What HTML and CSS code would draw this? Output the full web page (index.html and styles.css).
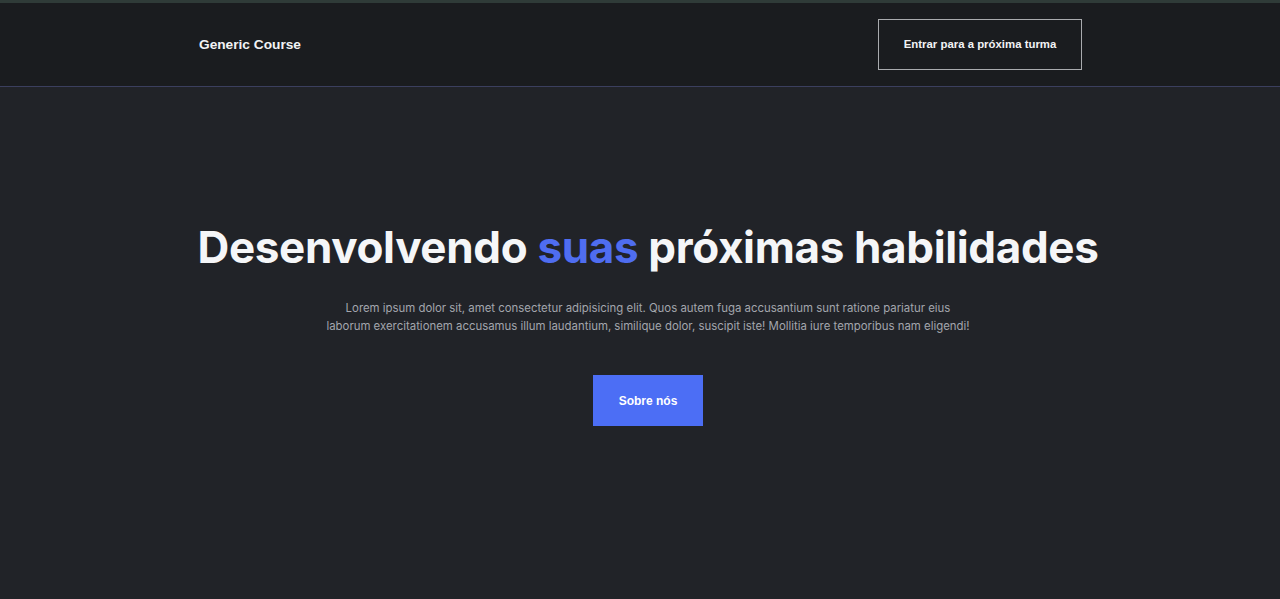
FILE: index.html
```html
<!DOCTYPE html>
<html lang="pt-BR">
<head>
<meta charset="utf-8">
<title>Generic Course</title>
<link rel="stylesheet" href="styles.css">
</head>
<body>
<header class="topbar">
  <div class="container topbar-inner">
    <span class="brand">Generic Course</span>
    <button class="btn-outline">Entrar para a próxima turma</button>
  </div>
</header>
<main class="hero">
  <h1 class="hero-title">Desenvolvendo <span class="accent">suas</span> próximas habilidades</h1>
  <p class="hero-text">Lorem ipsum dolor sit, amet consectetur adipisicing elit. Quos autem fuga accusantium sunt ratione pariatur eius laborum exercitationem accusamus illum laudantium, similique dolor, suscipit iste! Mollitia iure temporibus nam eligendi!</p>
  <button class="btn-primary">Sobre nós</button>
</main>
</body>
</html>
```
FILE: styles.css
```css
* { box-sizing: border-box; }
html, body { margin: 0; padding: 0; }
body {
  background: #212328;
  color: #f5f6f8;
  font-family: "Inter", "Liberation Sans", sans-serif;
  min-height: 599px;
}
.topbar {
  background: #1a1c1f;
  border-top: 3px solid #2f3b38;
  border-bottom: 1px solid #3b3f5e;
  height: 87px;
}
.container {
  width: 884px;
  margin: 0 auto;
  padding-left: 1px;
}
.topbar-inner {
  height: 83px;
  display: flex;
  align-items: center;
  justify-content: space-between;
}
.brand {
  font-family: "Liberation Sans", Arial, sans-serif;
  font-weight: 700;
  font-size: 13.7px;
  color: #f2f3f5;
}
.btn-outline {
  width: 204px;
  height: 51px;
  background: transparent;
  border: 1px solid #a9abae;
  color: #f2f3f5;
  font-family: "Liberation Sans", Arial, sans-serif;
  font-weight: 700;
  font-size: 11.4px;
  padding: 0;
  margin-bottom: 1px;
}
.hero {
  display: flex;
  flex-direction: column;
  align-items: center;
  padding-top: 133px;
  padding-left: 16px;
  text-align: center;
}
.hero-title {
  margin: 0;
  font-size: 44px;
  font-weight: 700;
  line-height: 54px;
  letter-spacing: -0.35px;
  color: #f5f6f8;
}
.accent { color: #4f6df0; }
.hero-text {
  width: 645px;
  margin: 25px 0 0;
  font-size: 11.4px;
  line-height: 18px;
  color: #a3a6ad;
}
.btn-primary {
  margin-top: 40px;
  width: 110px;
  height: 51px;
  border: none;
  background: #4c6ef5;
  color: #ffffff;
  font-family: "Liberation Sans", Arial, sans-serif;
  font-weight: 700;
  font-size: 12px;
  padding: 0;
}
```
